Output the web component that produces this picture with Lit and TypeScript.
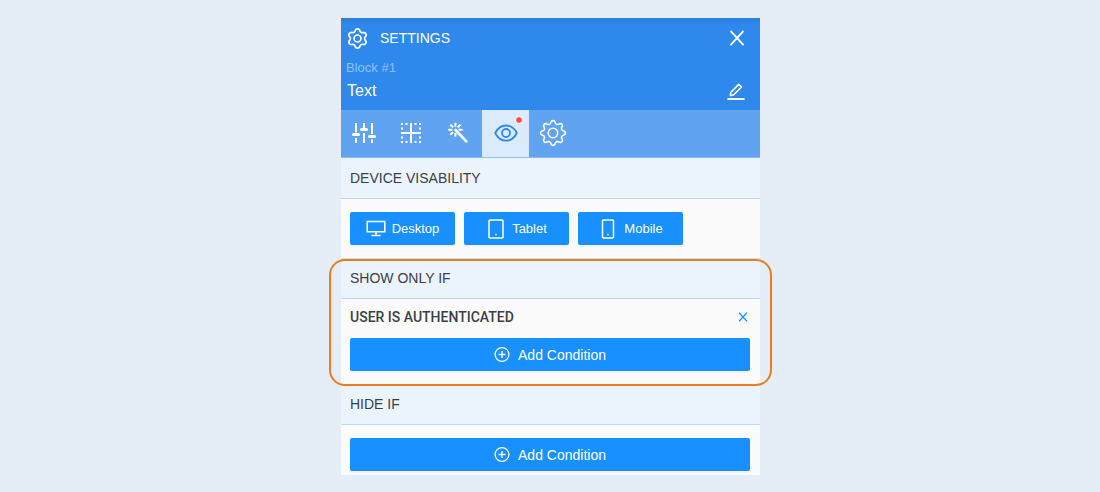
import { LitElement, html, css, svg, nothing } from "lit";
import { customElement, state } from "lit/decorators.js";

const wave = (cx: number, cy: number, r: number, amp: number, teeth: number) => {
  const points: string[] = [];
  for (let i = 0; i < 120; i++) {
    const a = (i / 120) * Math.PI * 2;
    const c = Math.cos(a * teeth);
    const k = r + amp * Math.sign(c) * Math.pow(Math.abs(c), 0.6);
    points.push(`${(cx + k * Math.sin(a)).toFixed(2)} ${(cy - k * Math.cos(a)).toFixed(2)}`);
  }
  return `M${points.join("L")}Z`;
};

const line = (size: number, width: number, body: unknown) => html`<svg
  width=${size}
  height=${size}
  viewBox="0 0 ${size} ${size}"
  fill="none"
  stroke="currentColor"
  stroke-width=${width}
  aria-hidden="true"
>${body}</svg>`;

const icons = {
  gear: line(22, 1.7, svg`<path stroke-linejoin="round" d=${wave(10.5, 11.5, 8.4, 1.2, 6)} /><circle cx="10.500" cy="11.500" r="3.500" />`),
  bigGear: line(28, 1.6, svg`<path stroke-linejoin="round" d=${wave(14, 14, 10.9, 1.5, 8)} /><circle cx="14" cy="14" r="4.700" />`),
  close: line(16, 1.9, svg`<path d="M1.500 .8 14.500 15.200M14.500 .8 1.500 15.200" />`),
  remove: line(10, 1.4, svg`<path d="M1 .6 9 9.400M9 .6 1 9.400" />`),
  edit: line(18, 1.7, svg`<path stroke-linejoin="round" d="M3.700 10.500 11.700 2.300 14.500 5 6.400 13 3.400 13.400Z" /><path stroke-width="2" d="M.5 17H17.500" />`),
  sliders: line(26, 2, svg`<path d="M4 3V12.500M4 18V23M12 3V8M12 13V23M20 3V14M20 19.500V23" /><path stroke-width="3" stroke-linecap="round" d="M1.500 14.500H6.500M9.500 9.500H14.500M17.500 16.500H22.500" />`),
  layout: line(22, 2, svg`<path d="M10 2V20M1 11H19" /><path stroke-dasharray="2 2.500" d="M0 2H20M0 20H20M1 1V21M19 1V21" />`),
  wand: line(22, 2, svg`<path stroke-width="2.600" stroke-linecap="round" d="M7.500 8 18.300 19.300" /><path d="M7.400 .7V4.700M7.400 10.700V14.700M.2 7.700H4.400M10.400 7.700H14.700M2.300 2.600 5.100 5.400M12.500 2.600 9.700 5.400M2.300 12.800 5.100 10" />`),
  eye: line(24, 1.8, svg`<path d="M1.200 12C4 6.500 7.600 4.500 12 4.500S20 6.500 22.800 12C20 17.500 16.400 19.700 12 19.700S4 17.500 1.200 12Z" /><circle cx="12" cy="12" r="4" />`),
  desktop: line(20, 1.5, svg`<path d="M1.200 2.500H18.800V12.800H1.200ZM10 13V16M5.500 16.500H14.500" />`),
  tablet: line(20, 1.5, svg`<rect x="3" y="1" width="14" height="18" rx="1" /><path d="M9.300 15.500H10.700" />`),
  mobile: line(20, 1.5, svg`<rect x="4.500" y="1" width="11" height="18" rx="1" /><path d="M9.300 15.500H10.700" />`),
  plus: line(16, 1.3, svg`<circle cx="8" cy="7.500" r="6.900" /><path d="M8 4V11M4.500 7.500H11.500" />`),
};

@customElement("app-root")
export class AppRoot extends LitElement {
  @state() private active = "Visibility";
  @state() private conditions = ["User is authenticated"];

  static styles = css`
    :host {
      display: block;
      box-sizing: border-box;
      min-height: 100vh;
      padding: 18px 0 17px 1px;
      background: #e5edf7;
      color: #3b3f46;
      font-family: "Liberation Sans", Arial, sans-serif;
      font-size: 14px;
      line-height: 20px;
    }
    * { box-sizing: border-box; }
    svg { display: block; flex: none; }
    h1, h2, p { margin: 0; font: inherit; }
    button {
      display: flex;
      align-items: center;
      justify-content: center;
      border: 0;
      padding: 0;
      background: none;
      color: inherit;
      font: inherit;
      cursor: pointer;
    }
    .panel {
      max-width: 419px;
      margin: 0 auto;
      background: #fbfbfb;
    }
    .top {
      height: 92px;
      padding: 9px 15px 0 5px;
      background: linear-gradient(#2c7bd9, #2f89ec 7px);
      color: #fff;
    }
    .row {
      display: flex;
      align-items: center;
      justify-content: space-between;
    }
    .title {
      display: flex;
      align-items: center;
      gap: 11px;
      height: 22px;
      padding-left: 1px;
    }
    .kind {
      padding: 9px 0 4px;
      font-size: 13px;
      color: #8fc0f7;
    }
    .name { padding-left: 1px; font-size: 16px; line-height: 18px; }
    .tabs {
      display: flex;
      background: #60a3f0;
      border-bottom: 1px solid #8fbef5;
      color: #fff;
    }
    .tab { position: relative; width: 47px; height: 47px; padding-bottom: 1px; }
    .tab.active { background: #dcebfc; color: #2f89ec; }
    .dot {
      position: absolute;
      top: 6px;
      right: 6px;
      width: 8px;
      height: 8px;
      border: 1px solid #fff;
      border-radius: 50%;
      background: #ff4d4f;
    }
    .head {
      display: flex;
      align-items: center;
      height: 41px;
      padding: 0 9px;
      background: #ebf3fd;
      border-bottom: 1px solid #b9d9fa;
      text-transform: uppercase;
    }
    .section + .section .head { border-top: 1px solid #cfe1f5; padding-bottom: 2px; }
    .body { padding: 13px 10px 13px 9px; }
    .body.tight { padding-top: 0; }
    .body.last { padding-bottom: 4px; }
    .devices { display: flex; gap: 9px; }
    .solid {
      gap: 8px;
      width: 100%;
      height: 33px;
      border-radius: 2px;
      background: #1890ff;
      box-shadow: 0 2px 0 rgba(0, 0, 0, 0.04);
      color: #fff;
    }
    .devices .solid { gap: 6px; width: 105px; font-size: 13px; }
    .condition { height: 39px; padding-bottom: 4px; padding-right: 2px; }
    .condition p {
      font-family: Roboto, sans-serif;
      font-weight: 500;
      text-transform: uppercase;
    }
    .condition button { color: #1890ff; }
    .marked { position: relative; }
    .marked::after {
      content: "";
      position: absolute;
      inset: 1px -12px -2px;
      border: 2px solid #e67e22;
      border-radius: 16px;
      pointer-events: none;
    }
  `;

  private tabs = [
    { name: "Options", icon: icons.sliders },
    { name: "Layout", icon: icons.layout },
    { name: "Effects", icon: icons.wand },
    { name: "Visibility", icon: icons.eye, alert: true },
    { name: "Advanced", icon: icons.bigGear },
  ];

  private devices = [
    { name: "Desktop", icon: icons.desktop },
    { name: "Tablet", icon: icons.tablet },
    { name: "Mobile", icon: icons.mobile },
  ];

  private addButton() {
    return html`<button class="solid">${icons.plus}Add Condition</button>`;
  }

  render() {
    return html`
      <main class="panel">
        <header class="top">
          <div class="row">
            <h1 class="title">${icons.gear}SETTINGS</h1>
            <button aria-label="Close">${icons.close}</button>
          </div>
          <p class="kind">Block #1</p>
          <div class="row">
            <p class="name">Text</p>
            <button aria-label="Rename">${icons.edit}</button>
          </div>
        </header>
        <nav class="tabs">
          ${this.tabs.map(
            (t) => html`<button
              class="tab ${t.name === this.active ? "active" : ""}"
              aria-label=${t.name}
              @click=${() => (this.active = t.name)}
            >${t.icon}${t.alert ? html`<span class="dot"></span>` : nothing}</button>`
          )}
        </nav>
        <section class="section">
          <h2 class="head">Device visability</h2>
          <div class="body devices">
            ${this.devices.map((d) => html`<button class="solid">${d.icon}${d.name}</button>`)}
          </div>
        </section>
        <section class="section marked">
          <h2 class="head">Show only if</h2>
          <div class="body tight">
            ${this.conditions.map(
              (c) => html`<div class="row condition">
                <p>${c}</p>
                <button
                  aria-label="Remove condition"
                  @click=${() => (this.conditions = this.conditions.filter((x) => x !== c))}
                >${icons.remove}</button>
              </div>`
            )}
            ${this.addButton()}
          </div>
        </section>
        <section class="section">
          <h2 class="head">Hide if</h2>
          <div class="body last">${this.addButton()}</div>
        </section>
      </main>
    `;
  }
}
